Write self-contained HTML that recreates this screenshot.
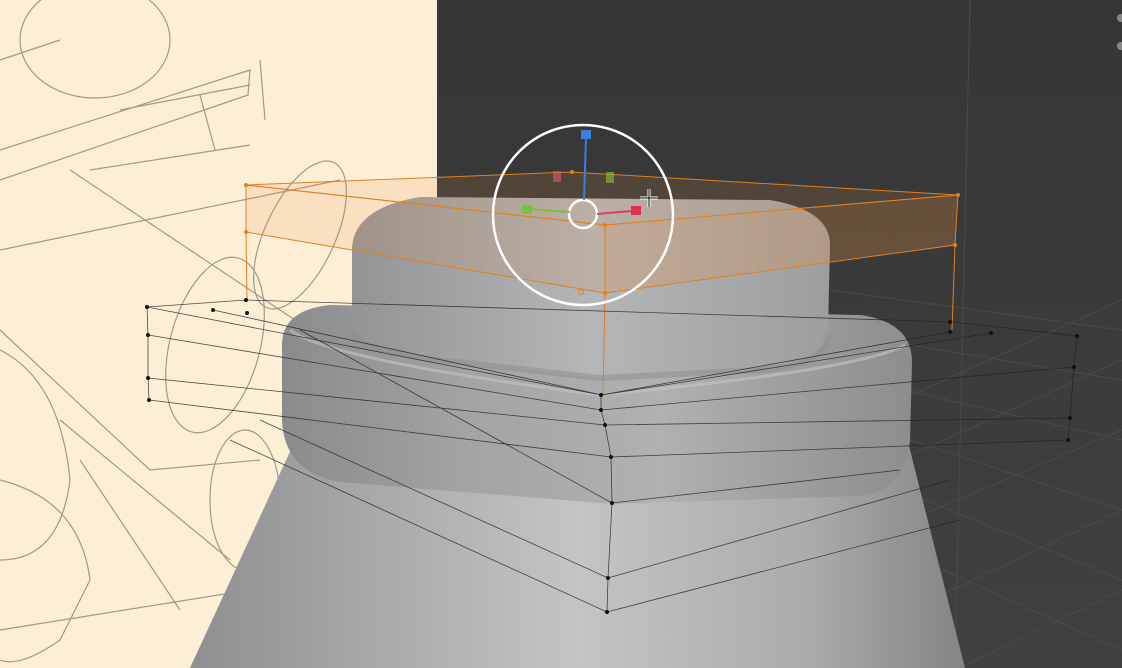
<!DOCTYPE html>
<html><head><meta charset="utf-8"><style>
html,body{margin:0;padding:0;width:1122px;height:668px;overflow:hidden;background:#3a3a3a}
svg{display:block}
</style></head><body>
<svg width="1122" height="668" viewBox="0 0 1122 668" xmlns="http://www.w3.org/2000/svg">
<defs>
<linearGradient id="bg" x1="0" y1="0" x2="0" y2="1">
<stop offset="0" stop-color="#363636"/><stop offset="1" stop-color="#404040"/></linearGradient>
<linearGradient id="cone" x1="0" y1="0" x2="1" y2="0">
<stop offset="0" stop-color="#8e8f90"/><stop offset="0.2" stop-color="#a4a5a6"/><stop offset="0.5" stop-color="#c3c4c5"/><stop offset="0.8" stop-color="#aaabac"/><stop offset="1" stop-color="#838485"/></linearGradient>
<linearGradient id="ring" x1="0" y1="0" x2="1" y2="0">
<stop offset="0" stop-color="#8a8b8c"/><stop offset="0.3" stop-color="#a3a4a5"/><stop offset="0.6" stop-color="#b0b1b2"/><stop offset="1" stop-color="#8c8d8e"/></linearGradient>
<linearGradient id="neck" x1="0" y1="0" x2="1" y2="0">
<stop offset="0" stop-color="#939495"/><stop offset="0.5" stop-color="#b5b6b7"/><stop offset="1" stop-color="#9d9e9f"/></linearGradient>
</defs>
<rect width="1122" height="668" fill="url(#bg)"/>
<g stroke="#4a4a4a" stroke-width="1" fill="none">
<path d="M830,290 L1122,330 M820,330 L1122,380 M860,380 L1122,440 M880,430 L1122,510 M900,490 L1122,580 M920,560 L1122,650"/>
<path d="M900,400 L1122,300 M900,460 L1122,360 M910,520 L1122,430 M930,600 L1122,510 M960,668 L1122,590"/>
</g>
<line x1="970" y1="0" x2="955" y2="668" stroke="#4a4a4a"/>
<rect width="437" height="668" fill="#fdeed6"/>
<g stroke="#8a8578" stroke-width="1.2" fill="none" opacity="0.8">
<ellipse cx="95" cy="40" rx="75" ry="58"/>
<path d="M0,150 L250,70 L248,95 L0,180"/>
<path d="M120,110 L250,85 M0,60 L60,40"/>
<path d="M200,95 L215,150 M260,60 L265,120"/>
<path d="M0,250 L340,180 M70,170 L430,410 M90,170 L250,145"/>
<ellipse cx="215" cy="345" rx="45" ry="90" transform="rotate(15 215 345)"/>
<ellipse cx="300" cy="235" rx="35" ry="80" transform="rotate(25 300 235)"/>
<path d="M0,350 Q60,380 70,480 Q60,560 0,560"/>
<path d="M0,480 Q80,500 90,580 L60,640 Q20,668 0,660"/>
<ellipse cx="245" cy="500" rx="35" ry="70"/>
<path d="M0,330 L150,470 L260,460 M60,420 L230,560 M0,630 L437,560"/>
<path d="M80,460 L180,610"/>
</g>
<path d="M300,430 L905,430 L965,668 L190,668 Z" fill="url(#cone)"/>
<path d="M282,345 Q282,310 330,305 L860,315 Q912,322 912,362 L910,440 Q906,490 860,496 L612,504 L340,482 Q284,472 282,420 Z" fill="url(#ring)"/>
<path d="M290,330 Q330,360 600,395 Q860,370 905,345" stroke="#c4c5c6" stroke-width="3" fill="none" opacity="0.6"/>
<path d="M352,248 Q354,208 420,197 L770,200 Q830,210 830,245 L828,330 Q826,365 760,370 L600,378 L420,358 Q354,348 352,320 Z" fill="url(#neck)"/>
<path d="M352,330 Q356,348 420,358 L600,378 L760,370 Q826,365 828,335" stroke="#8b8c8d" stroke-width="6" fill="none" opacity="0.5"/>
<g fill="#e89040" stroke="#e08020" stroke-width="1">
<path d="M246,185 L570,172 L958,195 L605,225 Z" fill-opacity="0.14"/>
<path d="M246,185 L605,225 L605,293 L246,232 Z" fill-opacity="0.14"/>
<path d="M605,225 L958,195 L955,245 L605,293 Z" fill-opacity="0.26"/>
</g>
<path d="M605,293 L603,395 M955,245 L952,330 M246,232 L247,300" stroke="#e08020" stroke-width="1"/>
<g stroke="#222" stroke-width="0.8" fill="none" opacity="0.8">
<path d="M147,307 L246,300 L952,322 L1077,336 L1074,367 L1070,418 L1068,440"/>
<path d="M147,307 L148,335 L148,378 L149,400"/>
<path d="M147,307 L601,395 L950,332 M148,335 L601,410 L1074,367 M148,378 L605,425 L1070,418 M149,400 L611,457 L1068,440"/>
<path d="M213,310 L602,395 L991,333 M300,330 L612,503 L900,470"/>
<path d="M601,395 L601,410 L605,425 L611,457 L612,503 L608,578 L607,612"/>
<path d="M260,420 L608,578 L950,480 M230,440 L607,612 L960,520"/>
</g>
<g fill="#111">
<circle cx="147" cy="307" r="2"/><circle cx="148" cy="335" r="2"/><circle cx="148" cy="378" r="2"/><circle cx="149" cy="400" r="2"/>
<circle cx="213" cy="310" r="2"/><circle cx="246" cy="300" r="2"/><circle cx="247" cy="313" r="2"/>
<circle cx="601" cy="395" r="2"/><circle cx="601" cy="410" r="2"/><circle cx="605" cy="425" r="2"/><circle cx="611" cy="457" r="2"/><circle cx="612" cy="503" r="2"/><circle cx="608" cy="578" r="2"/><circle cx="607" cy="612" r="2"/>
<circle cx="950" cy="322" r="2"/><circle cx="950" cy="332" r="2"/><circle cx="991" cy="333" r="2"/><circle cx="1077" cy="336" r="2"/><circle cx="1074" cy="367" r="2"/><circle cx="1070" cy="418" r="2"/><circle cx="1068" cy="440" r="2"/>
</g>
<g fill="#e08020"><circle cx="246" cy="185" r="2"/><circle cx="246" cy="232" r="2"/><circle cx="605" cy="225" r="2"/><circle cx="605" cy="293" r="2"/><circle cx="958" cy="195" r="2"/><circle cx="955" cy="245" r="2"/><circle cx="572" cy="172" r="2"/></g>
<circle cx="581" cy="292" r="2.5" fill="none" stroke="#e08020"/>
<circle cx="583" cy="215" r="90" fill="none" stroke="#fff" stroke-width="2.5"/>
<circle cx="583" cy="214" r="14" fill="none" stroke="#fff" stroke-width="2.5"/>
<line x1="584" y1="200" x2="586" y2="137" stroke="#3a7fe0" stroke-width="2"/>
<rect x="581" y="130" width="10" height="9" fill="#3a7fe0"/>
<line x1="570" y1="212" x2="530" y2="209" stroke="#7ac040" stroke-width="2"/>
<rect x="522" y="205" width="10" height="9" fill="#7ac040"/>
<line x1="597" y1="214" x2="632" y2="211" stroke="#d84060" stroke-width="2"/>
<rect x="631" y="206" width="10" height="9" fill="#e03050"/>
<rect x="553" y="171" width="8" height="11" fill="#d86060" opacity="0.6"/>
<rect x="606" y="172" width="8" height="11" fill="#80b040" opacity="0.7"/>
<g stroke="#fff" stroke-width="3"><line x1="649" y1="189" x2="649" y2="207"/><line x1="640" y1="198" x2="658" y2="198"/></g>
<g stroke="#000" stroke-width="1"><line x1="649" y1="189" x2="649" y2="207"/><line x1="640" y1="198" x2="658" y2="198"/></g>
<g fill="#888"><circle cx="1121" cy="18" r="4"/><circle cx="1121" cy="46" r="4"/></g>
</svg>
</body></html>
